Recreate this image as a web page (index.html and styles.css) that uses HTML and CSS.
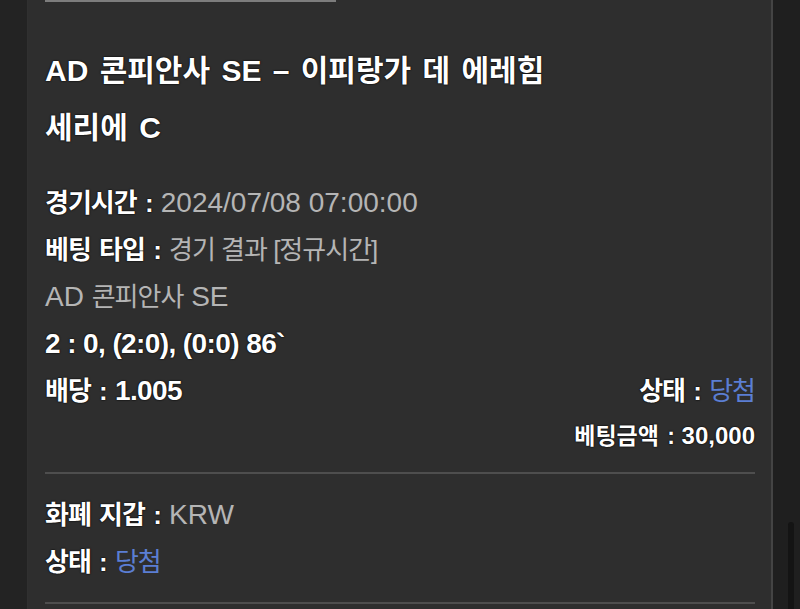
FILE: index.html
```html
<!DOCTYPE html>
<html lang="ko">
<head>
    <meta charset="UTF-8">
    <meta name="viewport" content="width=device-width, initial-scale=1.0">
    <title>베팅 상세</title>
    <link rel="stylesheet" href="styles.css">
</head>
<body>
    <div class="page">
        <div class="gutter"></div>

        <main class="panel">
            <div class="top-rule"></div>

            <h2 class="title">AD 콘피안사 SE – 이피랑가 데 에레힘<br>세리에 C</h2>

            <div class="details">
                <div class="row"><span class="label">경기시간 : </span><span class="value">2024/07/08 07:00:00</span></div>
                <div class="row"><span class="label">베팅 타입 : </span><span class="value ko">경기 결과 [정규시간]</span></div>
                <div class="row"><span class="value">AD <span class="ko">콘피안사</span> SE</span></div>
                <div class="row"><span class="strong">2 : 0, (2:0), (0:0) 86`</span></div>
                <div class="row split">
                    <span><span class="label">배당 : </span><span class="strong">1.005</span></span>
                    <span><span class="label">상태 : </span><span class="win">당첨</span></span>
                </div>
                <div class="amount"><span class="ko">베팅금액 :</span> 30,000</div>
            </div>

            <hr class="divider">

            <div class="details second">
                <div class="row"><span class="label">화폐 지갑 : </span><span class="value">KRW</span></div>
                <div class="row"><span class="label">상태 : </span><span class="win">당첨</span></div>
            </div>

            <hr class="divider">
        </main>

        <div class="scroll">
            <div class="thumb"></div>
        </div>
    </div>
</body>
</html>
```

FILE: styles.css
```css
*
{
    box-sizing: border-box;
}

body
{
    margin: 0;
    background-color: #232323;
    font-family: "Liberation Sans", "Noto Sans CJK KR", sans-serif;
    color: #fff;
}

.page
{
    display: flex;
    height: 609px;
    overflow: hidden;
}

.gutter
{
    width: 27px;
    flex: none;
    background-color: #232323;
}

.panel
{
    width: 746px;
    flex: none;
    background-color: #2e2e2e;
    border-left: 1px solid #303030;
    border-right: 2px solid #444;
    padding: 0 16px 0 17px;
}

.top-rule
{
    width: 291px;
    height: 2px;
    background-color: #7d7d7d;
}

.title
{
    margin: 40px 0 0;
    font-size: 30px;
    line-height: 57px;
    font-weight: 700;
    word-spacing: 3px;
    text-shadow: 0 0 2px #000, 0 0 1px #000;
}

.details
{
    margin-top: 23px;
}

.details.second
{
    margin-top: 17px;
}

.row
{
    font-size: 28px;
    line-height: 47px;
    white-space: nowrap;
}

.split
{
    display: flex;
    justify-content: space-between;
}

/* hangul runs are set a bit tighter than the latin text */
.label,
.win,
.ko
{
    font-size: 26px;
    line-height: 1;
    letter-spacing: -1px;
}

.label
{
    word-spacing: 2px;
}

.label,
.strong
{
    color: #fff;
    font-weight: 700;
    text-shadow: 0 0 2px #000, 0 0 1px #000;
}

.strong
{
    letter-spacing: -0.6px;
}

.value
{
    color: #b5b5b5;
}

.win
{
    color: #5b7ed3;
}

.amount
{
    margin-top: 4px;
    text-align: right;
    font-size: 24px;
    line-height: 36px;
    font-weight: 700;
    text-shadow: 0 0 2px #000, 0 0 1px #000;
}

.amount .ko
{
    font-size: 23px;
    letter-spacing: 0;
    word-spacing: 2px;
}

.divider
{
    margin: 18px 0 0;
    height: 2px;
    border: 0;
    background-color: #4e4e4e;
}

.second + .divider
{
    margin-top: 17px;
}

.scroll
{
    flex: 1;
    background-color: #1f1f1f;
    padding: 522px 0 0 15px;
}

.thumb
{
    width: 6px;
    height: 120px;
    border-radius: 3px;
    background-color: #141414;
}
```
